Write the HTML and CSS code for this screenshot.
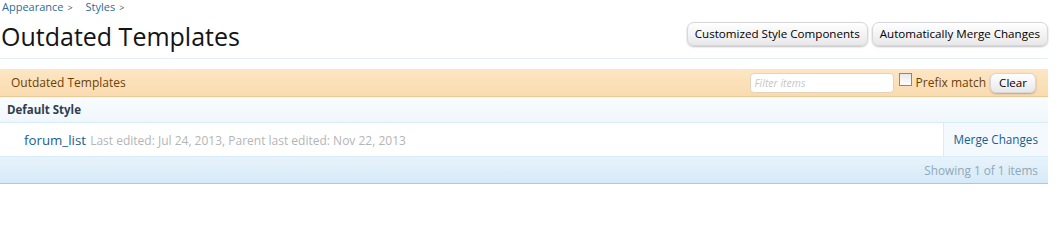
FILE: index.html
```html
<!DOCTYPE html>
<html>
<head>
<meta charset="utf-8">
<link rel="stylesheet" href="styles.css">
</head>
<body>
<div class="page">
  <div class="breadcrumb">
    <a class="crumb">Appearance</a><span class="sep">&gt;</span>
    <a class="crumb">Styles</a><span class="sep">&gt;</span>
  </div>
  <div class="titlebar">
    <h1 class="title">Outdated Templates</h1>
    <div class="topctrls">
      <span class="button">Customized Style Components</span>
      <span class="button">Automatically Merge Changes</span>
    </div>
  </div>
  <div class="list">
    <div class="listhead">
      <span class="headtext">Outdated Templates</span>
      <div class="filter">
        <span class="filterinput">Filter items</span>
        <span class="checkbox"></span>
        <span class="prefix">Prefix match</span>
        <span class="button small">Clear</span>
      </div>
    </div>
    <div class="group">Default Style</div>
    <div class="item">
      <div class="itemmain"><a class="itemname">forum_list</a> <span class="meta">Last edited: Jul 24, 2013, Parent last edited: Nov 22, 2013</span></div>
      <div class="itemaction">Merge Changes</div>
    </div>
    <div class="listfoot">Showing 1 of 1 items</div>
  </div>
</div>
</body>
</html>
```
FILE: styles.css
```css
html, body { margin: 0; padding: 0; background: #fff; }
body { font-family: "Open Sans", "DejaVu Sans", sans-serif; color: #000; }
.page { width: 1048px; }
.breadcrumb { height: 14px; font-size: 11px; line-height: 13px; padding-left: 2px; color: #2b6c99; }
.crumb { color: #2b6c99; }
.sep { font-size: 9px; color: #555; margin: 0 10px 0 4px; }
.titlebar { display: flex; justify-content: space-between; align-items: flex-start; border-bottom: 1px solid #e3eef5; height: 44px; }
.title { margin: 6px 0 0 1px; font-size: 25px; font-weight: normal; line-height: 32px; color: #141414; }
.topctrls { display: flex; gap: 4px; margin-top: 8px; }
.button { display: inline-block; font-size: 11.6px; line-height: 22px; height: 22px; padding: 0 7px; border-radius: 7px; color: #000;
  background: linear-gradient(#ffffff, #e8e8ea); border: 1px solid #d7d7da; box-shadow: 0 1px 2px rgba(0,0,0,0.25); }
.list { margin-top: 10px; }
.listhead { height: 27px; display: flex; justify-content: space-between; align-items: center; background: linear-gradient(#fde6c3, #f9dbb0); border-bottom: 1px solid #efc891; }
.headtext { font-size: 12px; color: #6d3f03; padding-left: 11px; }
.filter { display: flex; align-items: center; margin-right: 12px; }
.filterinput { width: 138px; height: 18px; line-height: 18px; font-size: 10.5px; font-style: italic; color: #c7c7c7; background: #fff; border: 1px solid #e6d3b8; border-radius: 4px; padding-left: 4px; }
.checkbox { width: 11px; height: 11px; border: 1px solid #888; background: linear-gradient(#e8e8e8, #fff); margin: -6px 4px 0 5px; }
.prefix { font-size: 12px; color: #6d3f03; margin-right: 4px; }
.button.small { height: 18px; line-height: 18px; padding: 0 8px; border-radius: 6px; }
.group { height: 25px; line-height: 25px; font-size: 11.5px; font-weight: bold; color: #2f3e4f; padding-left: 7px; background: linear-gradient(#f9fcfe, #f0f7fc); border-bottom: 1px solid #d7edfc; }
.item { display: flex; height: 33px; border-bottom: 1px solid #d7edfc; }
.itemmain { flex: 1; padding-left: 24px; line-height: 33px; background: #fff; }
.itemname { font-size: 13.3px; color: #176093; }
.meta { font-size: 12px; color: #b5b5b5; }
.itemaction { width: 94px; padding-right: 10px; text-align: right; line-height: 33px; font-size: 11.7px; color: #176093; background: #f4f9fd; border-left: 1px solid #d7edfc; }
.listfoot { height: 26px; line-height: 26px; text-align: right; padding-right: 10px; font-size: 11.8px; color: #8fa8ba; background: linear-gradient(#e8f3fb, #d5eaf8); border-bottom: 1px solid #a5cae4; }
```
